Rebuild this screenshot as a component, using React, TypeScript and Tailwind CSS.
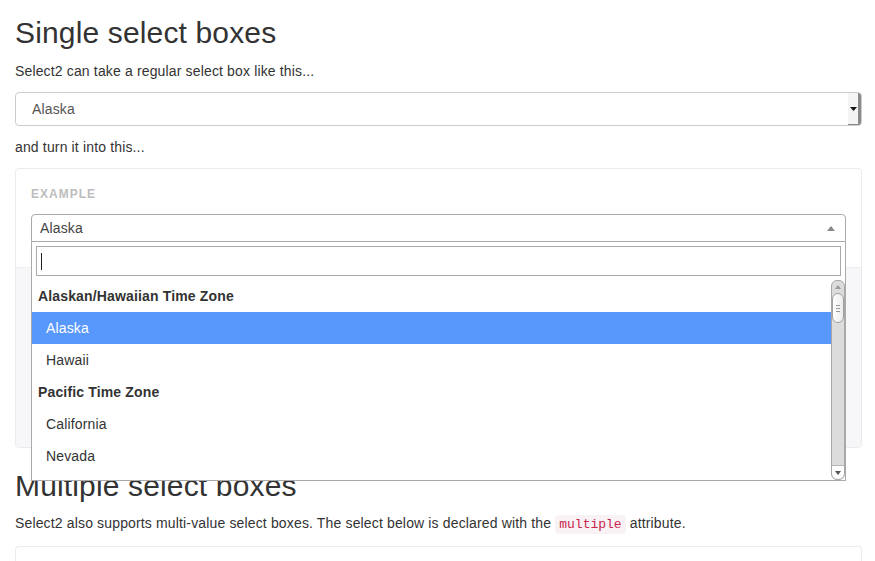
import React from "react";

type Row = { label: string; group?: boolean; active?: boolean };

const ROWS: Row[] = [
  { label: "Alaskan/Hawaiian Time Zone", group: true },
  { label: "Alaska", active: true },
  { label: "Hawaii" },
  { label: "Pacific Time Zone", group: true },
  { label: "California" },
  { label: "Nevada" },
  { label: "Oregon" },
];

function Scrollbar() {
  return (
    <div className="flex w-[14px] shrink-0 flex-col rounded-[6px] border border-[#a8a8a8] bg-[#dcdcdc]">
      <div className="flex h-[12px] items-center justify-center">
        <svg width="6" height="4" viewBox="0 0 6 4">
          <path d="M0 4 L3 0 L6 4 Z" fill="#9a9a9a" />
        </svg>
      </div>
      <div className="flex h-[30px] flex-col items-center justify-center gap-[2px] rounded-[6px] border border-[#a0a0a0] bg-gradient-to-r from-white to-[#ececec]">
        <div className="h-px w-[4px] bg-[#999]" />
        <div className="h-px w-[4px] bg-[#999]" />
        <div className="h-px w-[4px] bg-[#999]" />
      </div>
      <div className="flex-1" />
      <div className="flex h-[14px] items-center justify-center rounded-b-[6px] border-t border-[#b8b8b8] bg-white">
        <svg width="6" height="4" viewBox="0 0 6 4">
          <path d="M0 0 L6 0 L3 4 Z" fill="#555" />
        </svg>
      </div>
    </div>
  );
}

function Select2Open() {
  return (
    <div className="relative">
      <div className="flex h-[28px] items-center rounded-t-[4px] border border-[#aaa] bg-white pl-[8px] pr-[10px] text-[#444]">
        <span className="flex-1 leading-[28px]">Alaska</span>
        <svg width="8" height="5" viewBox="0 0 8 5">
          <path d="M0 5 L4 0 L8 5 Z" fill="#888" />
        </svg>
      </div>
      <div className="absolute left-0 right-0 top-full z-10 border border-t-0 border-[#aaa] bg-white">
        <div className="p-[4px]">
          <div className="flex h-[30px] items-center border border-[#aaa] px-[4px]">
            <div className="h-[17px] w-px bg-[#222]" />
          </div>
        </div>
        <div className="flex h-[200px]">
          <div className="flex-1 overflow-hidden">
            {ROWS.map((r) => (
              <div
                key={r.label}
                className={
                  r.group
                    ? "px-[6px] py-[6px] font-bold leading-[20px] text-[#333]"
                    : r.active
                    ? "bg-[#5897fb] py-[6px] pl-[14px] pr-[6px] leading-[20px] text-white"
                    : "py-[6px] pl-[14px] pr-[6px] leading-[20px] text-[#333]"
                }
              >
                {r.label}
              </div>
            ))}
          </div>
          <Scrollbar />
        </div>
      </div>
    </div>
  );
}

export default function App() {
  return (
    <div className="min-h-[561px] bg-white pl-[15px] pr-[13px] font-['Liberation_Sans',Arial,sans-serif] text-[14px] leading-[20px] tracking-[0.15px] text-[#333]">
      <h2 className="pt-[16px] text-[30px] font-normal leading-[33px]">Single select boxes</h2>
      <p className="mt-[12px]">Select2 can take a regular select box like this...</p>

      <div className="mt-[11px] flex h-[34px] items-stretch rounded-[4px] border border-[#ccc] bg-white">
        <span className="flex-1 pl-[16px] leading-[32px] text-[#555]">Alaska</span>
        <div className="flex w-[13px] items-center justify-center rounded-r-[3px] border-r-[3px] border-b border-[#8a8a8a] bg-[#f4f4f4]">
          <svg width="7" height="4" viewBox="0 0 7 4">
            <path d="M0 0 L7 0 L3.5 4 Z" fill="#111" />
          </svg>
        </div>
      </div>

      <p className="mt-[11px]">and turn it into this...</p>

      <div className="mt-[11px] rounded-[4px] border border-[#ebebeb]">
        <div className="px-[15px] pb-[25px] pt-[17px]">
          <div className="text-[12px] font-bold leading-[17px] tracking-[1px] text-[#bdbdbd]">EXAMPLE</div>
          <div className="mt-[11px]">
            <Select2Open />
          </div>
        </div>
        <div className="h-[180px] rounded-b-[4px] border-t border-[#eeeef0] bg-[#f7f7f9]" />
      </div>

      <h2 className="mt-[21px] text-[30px] font-normal leading-[33px]">Multiple select boxes</h2>
      <p className="mt-[11px]">
        Select2 also supports multi-value select boxes. The select below is declared with the{" "}
        <code className="rounded-[4px] bg-[#f9f2f4] px-[4px] py-[2px] font-['Liberation_Mono',monospace] text-[13px] tracking-normal text-[#c7254e]">
          multiple
        </code>{" "}
        attribute.
      </p>
      <div className="mt-[11px] h-[40px] rounded-t-[4px] border border-b-0 border-[#ebebeb]" />
    </div>
  );
}
